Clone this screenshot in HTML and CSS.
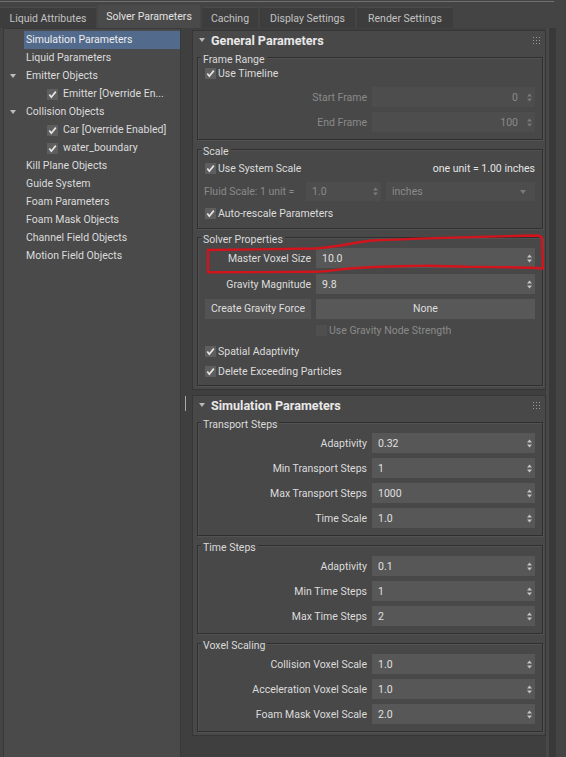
FILE: index.html
```html
<!DOCTYPE html>
<html>
<head>
<meta charset="utf-8">
<title>Solver Parameters</title>
<link rel="stylesheet" href="styles.css">
</head>
<body>
<div class="app">
  <div class="topline"></div>
  <div class="tabbar">
    <div class="tab w1">Liquid Attributes</div>
    <div class="tab w2 active">Solver Parameters</div>
    <div class="tab w3">Caching</div>
    <div class="tab w4">Display Settings</div>
    <div class="tab w5">Render Settings</div>
  </div>
  <div class="main">
    <div class="tree">
      <div class="node sel"><span class="gutter"></span><span class="label">Simulation Parameters</span></div>
      <div class="node"><span class="gutter"></span><span class="label">Liquid Parameters</span></div>
      <div class="node"><span class="gutter"><span class="exp"></span></span><span class="label">Emitter Objects</span></div>
      <div class="node child"><span class="gutter"></span><span class="cb"><svg width="11" height="11" viewBox="0 0 11 11"><rect width="11" height="11" fill="#5e5e5e"/><path d="M2.3 5.6 L4.3 8.2 L8.8 2.6" fill="none" stroke="#e6e6e6" stroke-width="1.7"/></svg></span><span class="label">Emitter [Override En...</span></div>
      <div class="node"><span class="gutter"><span class="exp"></span></span><span class="label">Collision Objects</span></div>
      <div class="node child"><span class="gutter"></span><span class="cb"><svg width="11" height="11" viewBox="0 0 11 11"><rect width="11" height="11" fill="#5e5e5e"/><path d="M2.3 5.6 L4.3 8.2 L8.8 2.6" fill="none" stroke="#e6e6e6" stroke-width="1.7"/></svg></span><span class="label">Car [Override Enabled]</span></div>
      <div class="node child"><span class="gutter"></span><span class="cb"><svg width="11" height="11" viewBox="0 0 11 11"><rect width="11" height="11" fill="#5e5e5e"/><path d="M2.3 5.6 L4.3 8.2 L8.8 2.6" fill="none" stroke="#e6e6e6" stroke-width="1.7"/></svg></span><span class="label">water_boundary</span></div>
      <div class="node"><span class="gutter"></span><span class="label">Kill Plane Objects</span></div>
      <div class="node"><span class="gutter"></span><span class="label">Guide System</span></div>
      <div class="node"><span class="gutter"></span><span class="label">Foam Parameters</span></div>
      <div class="node"><span class="gutter"></span><span class="label">Foam Mask Objects</span></div>
      <div class="node"><span class="gutter"></span><span class="label">Channel Field Objects</span></div>
      <div class="node"><span class="gutter"></span><span class="label">Motion Field Objects</span></div>
    </div>
    <div class="splitter"><div class="sgrip"></div></div>
    <div class="panel">
      <div class="rollouts">
        <div class="rollout">
          <div class="rhead">
            <span class="caret"></span><span class="rtitle">General Parameters</span>
            <svg class="rgrip" width="7" height="7" viewBox="0 0 7 7"><g fill="#9a9a9a"><rect x="0" y="0" width="1" height="1"/><rect x="3" y="0" width="1" height="1"/><rect x="6" y="0" width="1" height="1"/><rect x="0" y="3" width="1" height="1"/><rect x="3" y="3" width="1" height="1"/><rect x="6" y="3" width="1" height="1"/><rect x="0" y="6" width="1" height="1"/><rect x="3" y="6" width="1" height="1"/><rect x="6" y="6" width="1" height="1"/></g></svg>
          </div>
          <div class="rbody">
            <div class="group first">
              <div class="legend">Frame Range</div>
              <div class="check"><span class="cb"><svg width="11" height="11" viewBox="0 0 11 11"><rect width="11" height="11" fill="#5e5e5e"/><path d="M2.3 5.6 L4.3 8.2 L8.8 2.6" fill="none" stroke="#e6e6e6" stroke-width="1.7"/></svg></span>Use Timeline</div>
              <div class="srow wide mt5"><span class="lbl dis">Start Frame</span><div class="spin dis right"><span class="val">0</span><svg class="arr" width="5" height="9" viewBox="0 0 5 9"><g fill="#7a7a7a"><polygon points="0,3.5 2.5,0.5 5,3.5"/><polygon points="0,5.5 2.5,8.5 5,5.5"/></g></svg></div></div>
              <div class="srow wide mt5"><span class="lbl dis">End Frame</span><div class="spin dis right"><span class="val">100</span><svg class="arr" width="5" height="9" viewBox="0 0 5 9"><g fill="#7a7a7a"><polygon points="0,3.5 2.5,0.5 5,3.5"/><polygon points="0,5.5 2.5,8.5 5,5.5"/></g></svg></div></div>
            </div>
            <div class="group gB">
              <div class="legend">Scale</div>
              <div class="check mt3 split"><span class="cbwrap"><span class="cb"><svg width="11" height="11" viewBox="0 0 11 11"><rect width="11" height="11" fill="#5e5e5e"/><path d="M2.3 5.6 L4.3 8.2 L8.8 2.6" fill="none" stroke="#e6e6e6" stroke-width="1.7"/></svg></span>Use System Scale</span><span class="unit">one unit = 1.00 inches</span></div>
              <div class="frow mt5"><span class="flbl dis">Fluid Scale: 1 unit =</span><div class="spin dis"><span class="val">1.0</span><svg class="arr" width="5" height="9" viewBox="0 0 5 9"><g fill="#7a7a7a"><polygon points="0,3.5 2.5,0.5 5,3.5"/><polygon points="0,5.5 2.5,8.5 5,5.5"/></g></svg></div><div class="spin dis"><span class="val">inches</span><svg class="arr dd" width="6" height="4" viewBox="0 0 6 4"><polygon points="0,0 6,0 3,4" fill="#7a7a7a"/></svg></div></div>
              <div class="check mt4"><span class="cb"><svg width="11" height="11" viewBox="0 0 11 11"><rect width="11" height="11" fill="#5e5e5e"/><path d="M2.3 5.6 L4.3 8.2 L8.8 2.6" fill="none" stroke="#e6e6e6" stroke-width="1.7"/></svg></span>Auto-rescale Parameters</div>
            </div>
            <div class="group gC">
              <div class="legend">Solver Properties</div>
              <div class="srow narrow mt3"><span class="lbl">Master Voxel Size</span><div class="spin"><span class="val">10.0</span><svg class="arr" width="5" height="9" viewBox="0 0 5 9"><g fill="#c4c4c4"><polygon points="0,3.5 2.5,0.5 5,3.5"/><polygon points="0,5.5 2.5,8.5 5,5.5"/></g></svg></div></div>
              <div class="srow narrow mt6"><span class="lbl">Gravity Magnitude</span><div class="spin"><span class="val">9.8</span><svg class="arr" width="5" height="9" viewBox="0 0 5 9"><g fill="#c4c4c4"><polygon points="0,3.5 2.5,0.5 5,3.5"/><polygon points="0,5.5 2.5,8.5 5,5.5"/></g></svg></div></div>
              <div class="srow narrow mt5"><div class="btn">Create Gravity Force</div><div class="btn pick">None</div></div>
              <div class="check mt3 indent dis"><span class="cb"><svg width="11" height="11" viewBox="0 0 11 11"><rect width="11" height="11" fill="#4f4f4f"/></svg></span>Use Gravity Node Strength</div>
              <div class="check mt4"><span class="cb"><svg width="11" height="11" viewBox="0 0 11 11"><rect width="11" height="11" fill="#5e5e5e"/><path d="M2.3 5.6 L4.3 8.2 L8.8 2.6" fill="none" stroke="#e6e6e6" stroke-width="1.7"/></svg></span>Spatial Adaptivity</div>
              <div class="check mt3"><span class="cb"><svg width="11" height="11" viewBox="0 0 11 11"><rect width="11" height="11" fill="#5e5e5e"/><path d="M2.3 5.6 L4.3 8.2 L8.8 2.6" fill="none" stroke="#e6e6e6" stroke-width="1.7"/></svg></span>Delete Exceeding Particles</div>
            </div>
          </div>
        </div>

        <div class="rollout second">
          <div class="rhead">
            <span class="caret"></span><span class="rtitle">Simulation Parameters</span>
            <svg class="rgrip" width="7" height="7" viewBox="0 0 7 7"><g fill="#9a9a9a"><rect x="0" y="0" width="1" height="1"/><rect x="3" y="0" width="1" height="1"/><rect x="6" y="0" width="1" height="1"/><rect x="0" y="3" width="1" height="1"/><rect x="3" y="3" width="1" height="1"/><rect x="6" y="3" width="1" height="1"/><rect x="0" y="6" width="1" height="1"/><rect x="3" y="6" width="1" height="1"/><rect x="6" y="6" width="1" height="1"/></g></svg>
          </div>
          <div class="rbody">
            <div class="group first">
              <div class="legend">Transport Steps</div>
              <div class="srow wide mt3"><span class="lbl">Adaptivity</span><div class="spin"><span class="val">0.32</span><svg class="arr" width="5" height="9" viewBox="0 0 5 9"><g fill="#c4c4c4"><polygon points="0,3.5 2.5,0.5 5,3.5"/><polygon points="0,5.5 2.5,8.5 5,5.5"/></g></svg></div></div>
              <div class="srow wide mt5"><span class="lbl">Min Transport Steps</span><div class="spin"><span class="val">1</span><svg class="arr" width="5" height="9" viewBox="0 0 5 9"><g fill="#c4c4c4"><polygon points="0,3.5 2.5,0.5 5,3.5"/><polygon points="0,5.5 2.5,8.5 5,5.5"/></g></svg></div></div>
              <div class="srow wide mt5"><span class="lbl">Max Transport Steps</span><div class="spin"><span class="val">1000</span><svg class="arr" width="5" height="9" viewBox="0 0 5 9"><g fill="#c4c4c4"><polygon points="0,3.5 2.5,0.5 5,3.5"/><polygon points="0,5.5 2.5,8.5 5,5.5"/></g></svg></div></div>
              <div class="srow wide mt5"><span class="lbl">Time Scale</span><div class="spin"><span class="val">1.0</span><svg class="arr" width="5" height="9" viewBox="0 0 5 9"><g fill="#c4c4c4"><polygon points="0,3.5 2.5,0.5 5,3.5"/><polygon points="0,5.5 2.5,8.5 5,5.5"/></g></svg></div></div>
            </div>
            <div class="group gN">
              <div class="legend">Time Steps</div>
              <div class="srow wide mt3"><span class="lbl">Adaptivity</span><div class="spin"><span class="val">0.1</span><svg class="arr" width="5" height="9" viewBox="0 0 5 9"><g fill="#c4c4c4"><polygon points="0,3.5 2.5,0.5 5,3.5"/><polygon points="0,5.5 2.5,8.5 5,5.5"/></g></svg></div></div>
              <div class="srow wide mt5"><span class="lbl">Min Time Steps</span><div class="spin"><span class="val">1</span><svg class="arr" width="5" height="9" viewBox="0 0 5 9"><g fill="#c4c4c4"><polygon points="0,3.5 2.5,0.5 5,3.5"/><polygon points="0,5.5 2.5,8.5 5,5.5"/></g></svg></div></div>
              <div class="srow wide mt5"><span class="lbl">Max Time Steps</span><div class="spin"><span class="val">2</span><svg class="arr" width="5" height="9" viewBox="0 0 5 9"><g fill="#c4c4c4"><polygon points="0,3.5 2.5,0.5 5,3.5"/><polygon points="0,5.5 2.5,8.5 5,5.5"/></g></svg></div></div>
            </div>
            <div class="group gN">
              <div class="legend">Voxel Scaling</div>
              <div class="srow wide mt3"><span class="lbl">Collision Voxel Scale</span><div class="spin"><span class="val">1.0</span><svg class="arr" width="5" height="9" viewBox="0 0 5 9"><g fill="#c4c4c4"><polygon points="0,3.5 2.5,0.5 5,3.5"/><polygon points="0,5.5 2.5,8.5 5,5.5"/></g></svg></div></div>
              <div class="srow wide mt5"><span class="lbl">Acceleration Voxel Scale</span><div class="spin"><span class="val">1.0</span><svg class="arr" width="5" height="9" viewBox="0 0 5 9"><g fill="#c4c4c4"><polygon points="0,3.5 2.5,0.5 5,3.5"/><polygon points="0,5.5 2.5,8.5 5,5.5"/></g></svg></div></div>
              <div class="srow wide mt5"><span class="lbl">Foam Mask Voxel Scale</span><div class="spin"><span class="val">2.0</span><svg class="arr" width="5" height="9" viewBox="0 0 5 9"><g fill="#c4c4c4"><polygon points="0,3.5 2.5,0.5 5,3.5"/><polygon points="0,5.5 2.5,8.5 5,5.5"/></g></svg></div></div>
            </div>
          </div>
        </div>
      </div>
      <div class="vtrack"><div class="vstripe"></div></div>
    </div>
  </div>
  <svg class="markup" width="350" height="50" viewBox="0 0 350 50"><path d="M8,20 L116,18.5 C140,17 155,12 172,10.5 C230,8 290,6.5 338,5.5 C341,6 342,8 342,10 L343,38.5 C320,37 290,37 267,36.8 C245,36 230,35.5 223,35.8 C200,36 175,37 157,38 C140,39 128,41.5 116,41.8 L8,42.3 Z" fill="none" stroke="#d3141d" stroke-width="2.4" stroke-linejoin="round"/></svg>
</div>
</body>
</html>
```

FILE: styles.css
```css
* { box-sizing: border-box; }
html, body { margin: 0; padding: 0; }
body {
  width: 566px;
  height: 757px;
  overflow: hidden;
  background: #444444;
  font-family: Roboto, "Liberation Sans", sans-serif;
  font-size: 10.5px;
  color: #dcdcdc;
}
.app {
  position: relative;
  display: flex;
  flex-direction: column;
  height: 757px;
}
.topline {
  height: 5px;
  margin-top: 1px;
  margin-right: 12px;
  border-top: 1px solid #707070;
}
.tabbar {
  display: flex;
  align-items: flex-end;
  gap: 2px;
  height: 22px;
}
.tab {
  height: 21px;
  line-height: 21px;
  text-align: center;
  background: #3d3d3d;
  color: #c2c2c2;
  border-top: 1px solid #4b4b4b;
}
.tab.active {
  height: 23px;
  line-height: 22px;
  background: #4a4a4a;
  color: #e2e2e2;
}
.w1 { width: 96px; }
.w2 { width: 102px; }
.w3 { width: 56px; }
.w4 { width: 95px; }
.w5 { width: 96px; }

.main {
  display: flex;
  flex: 1;
  min-height: 0;
}
.tree {
  width: 178px;
  margin-left: 3px;
  padding-top: 2px;
  background: #4a4a4a;
  border: 1px solid #383838;
  border-bottom: none;
}
.node {
  display: flex;
  align-items: center;
  height: 18px;
  white-space: nowrap;
}
.node .gutter {
  width: 20px;
  flex: none;
  display: flex;
  align-items: center;
}
.node.child .gutter { width: 43px; }
.node .label {
  flex: 1;
  height: 18px;
  line-height: 18px;
  padding-left: 2px;
}
.node.child .label { padding-left: 5px; }
.node.sel .label { background: #526a8c; color: #eeeeee; }
.exp {
  margin-left: 6px;
  width: 0;
  height: 0;
  border-left: 3px solid transparent;
  border-right: 3px solid transparent;
  border-top: 4px solid #bdbdbd;
}
.cb { display: flex; width: 11px; height: 11px; flex: none; }

.splitter {
  width: 11px;
  flex: none;
  background: #3f3f3f;
  display: flex;
  flex-direction: column;
  padding-top: 368px;
}
.sgrip {
  margin-left: 3px;
  width: 3px;
  height: 15px;
  background-image: radial-gradient(circle, #a8a8a8 0.6px, transparent 0.8px);
  background-size: 3px 2px;
}
.panel {
  flex: 1;
  display: flex;
  background: #3f3f3f;
}
.rollouts {
  width: 354px;
  flex: none;
  padding-top: 2px;
}
.rollout {
  background: #484848;
  border: 1px solid #363636;
  padding-bottom: 3px;
}
.rollout.second { margin-top: 5px; }
.rhead {
  height: 18px;
  display: flex;
  align-items: center;
  padding-left: 6px;
  padding-right: 5px;
}
.caret {
  width: 0;
  height: 0;
  border-left: 3px solid transparent;
  border-right: 3px solid transparent;
  border-top: 4px solid #b8b8b8;
  margin-right: 6px;
}
.rtitle {
  flex: 1;
  font-weight: bold;
  font-size: 12.6px;
  color: #e8e8e8;
}
.rgrip { flex: none; }

.group {
  margin: 8px 2px 0 4px;
  border: 1px solid #2f2f2f;
  box-shadow: inset 1px 1px 0 #525252, 1px 1px 0 #525252;
  padding: 0 7px 7px 7px;
  display: flex;
  flex-direction: column;
}
.group.gB { margin-top: 9px; padding-bottom: 6px; }
.group.gC { padding-bottom: 5px; }
.group.gN { margin-top: 9px; }
.legend {
  align-self: flex-start;
  margin-top: -6px;
  margin-left: -4px;
  height: 13px;
  line-height: 15px;
  padding: 0 2px;
  background: #484848;
  color: #dadada;
}
.mt3 { margin-top: 3px; }
.mt4 { margin-top: 4px; }
.mt5 { margin-top: 5px; }
.mt6 { margin-top: 6px; }

.check {
  height: 17px;
  display: flex;
  align-items: center;
  gap: 2px;
  white-space: nowrap;
}
.check.split { justify-content: space-between; }
.cbwrap { display: flex; align-items: center; gap: 2px; }
.check.indent { padding-left: 111px; }
.dis { color: #8a8a8a; }
.unit { color: #e4e4e4; }

.srow {
  display: grid;
  height: 20px;
  column-gap: 5px;
  align-items: center;
}
.srow.wide { grid-template-columns: 162px 1fr; }
.srow.narrow { grid-template-columns: 106px 1fr; }
.lbl {
  text-align: right;
  white-space: nowrap;
}
.spin {
  height: 20px;
  background: #575757;
  display: flex;
  align-items: center;
  justify-content: space-between;
  padding: 0 3px 0 6px;
  color: #e0e0e0;
}
.spin.dis { background: #4d4d4d; color: #8a8a8a; }
.spin.right { justify-content: flex-end; }
.spin.right .val { margin-right: 9px; }
.arr { flex: none; }
.arr.dd { margin-right: 6px; }

.frow {
  display: grid;
  grid-template-columns: 96px 75px 1fr;
  column-gap: 5px;
  height: 19px;
  align-items: center;
}
.frow .flbl { white-space: nowrap; margin-left: -1px; }
.frow .spin { height: 19px; }

.btn {
  height: 20px;
  line-height: 20px;
  background: #535353;
  text-align: center;
  color: #dedede;
  white-space: nowrap;
}
.btn.pick { background: #585858; }

.vtrack {
  width: 20px;
  flex: none;
  background: #444444;
  border-left: 3px solid #484848;
}
.vstripe {
  width: 7px;
  height: 100%;
  background: #393939;
}
.markup {
  position: absolute;
  left: 200px;
  top: 230px;
}
```
